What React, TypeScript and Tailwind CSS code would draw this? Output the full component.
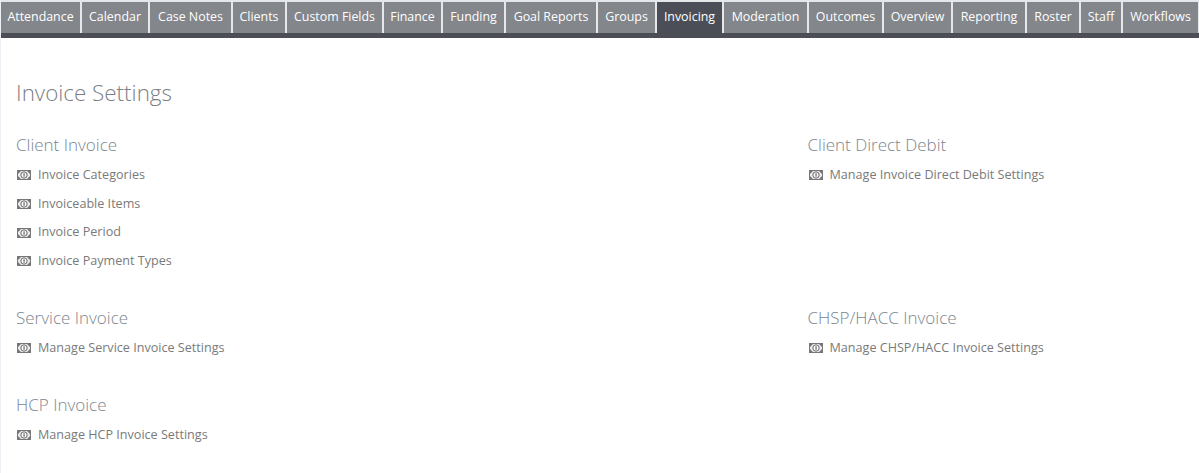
const tabs = [
  { label: 'Attendance', width: 'w-[79px]' },
  { label: 'Calendar', width: 'w-[66px]' },
  { label: 'Case Notes', width: 'w-[81px]' },
  { label: 'Clients', width: 'w-[52px]' },
  { label: 'Custom Fields', width: 'w-[95px]' },
  { label: 'Finance', width: 'w-[57px]' },
  { label: 'Funding', width: 'w-[61px]' },
  { label: 'Goal Reports', width: 'w-[90px]' },
  { label: 'Groups', width: 'w-[57px]' },
  { label: 'Invoicing', width: 'w-[65px]', active: true },
  { label: 'Moderation', width: 'w-[83px]' },
  { label: 'Outcomes', width: 'w-[73px]' },
  { label: 'Overview', width: 'w-[67px]' },
  { label: 'Reporting', width: 'w-[72px]' },
  { label: 'Roster', width: 'w-[52px]' },
  { label: 'Staff', width: 'w-[40px]' },
  { label: 'Workflows', width: 'w-[75px]' },
]

function MoneyIcon() {
  return (
    <svg width="14" height="10" viewBox="0 0 14 10" className="shrink-0 ml-[1px]">
      <rect x="0.5" y="0.5" width="13" height="9" fill="#ececec" stroke="#777" />
      <path d="M1 1h3L1 4zM13 1h-3l3 3zM1 9h3L1 6zM13 9h-3l3-3z" fill="#777" />
      <circle cx="7" cy="5" r="3.2" fill="#ffffff" stroke="#666" strokeWidth="1" />
      <rect x="6.5" y="3.2" width="1.1" height="3.6" fill="#555" />
    </svg>
  )
}

function Section({ title, links, className }: { title: string; links: string[]; className: string }) {
  return (
    <div className={className}>
      <h2 className="text-[17px] leading-[24px] font-light text-[#7b8690]">{title}</h2>
      <ul className="mt-[4px]">
        {links.map((l) => (
          <li key={l} className="flex items-center gap-[7px] h-[28.7px] text-[12.6px] text-[#7a7a7a]">
            <MoneyIcon />
            {l}
          </li>
        ))}
      </ul>
    </div>
  )
}

export default function App() {
  return (
    <div className="min-h-[473px] bg-white border-l border-[#eef0f6] font-['Open_Sans',sans-serif]">
      <nav className="flex gap-[2px] bg-[#e6e7ea] pt-[2px] border-b-[5px] border-[#4b4e54]">
        {tabs.map((t) => (
          <a
            key={t.label}
            className={`${t.width} h-[31px] flex items-center justify-center text-[12.4px] whitespace-nowrap text-white ${
              t.active ? 'bg-[#4b4e57]' : 'bg-[#83868b]'
            }`}
          >
            {t.label}
          </a>
        ))}
      </nav>
      <main className="pl-[15px] pr-4 pt-[40px]">
        <h1 className="text-[22.4px] leading-[30px] font-light text-[#7b8084]">Invoice Settings</h1>
        <div className="grid grid-cols-[791.5px_1fr] mt-[25px]">
          <Section
            className="h-[173px]"
            title="Client Invoice"
            links={['Invoice Categories', 'Invoiceable Items', 'Invoice Period', 'Invoice Payment Types']}
          />
          <Section className="h-[173px]" title="Client Direct Debit" links={['Manage Invoice Direct Debit Settings']} />
          <Section className="h-[87px]" title="Service Invoice" links={['Manage Service Invoice Settings']} />
          <Section className="h-[87px]" title="CHSP/HACC Invoice" links={['Manage CHSP/HACC Invoice Settings']} />
          <Section className="h-[60px]" title="HCP Invoice" links={['Manage HCP Invoice Settings']} />
        </div>
      </main>
    </div>
  )
}
